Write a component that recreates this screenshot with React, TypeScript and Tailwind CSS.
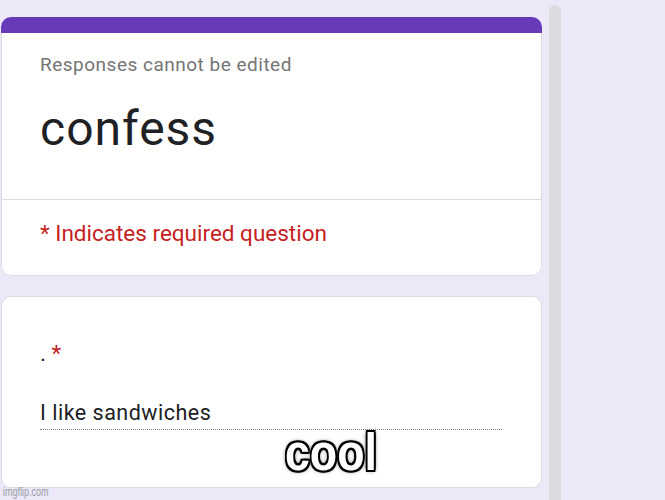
export default function App() {
  return (
    <div className="relative h-[500px] w-[665px] overflow-hidden bg-[#ede8f8] font-['Roboto',sans-serif]">
      <div className="flex gap-[7px] pl-px">
        <div className="flex w-[541px] flex-col gap-[20px] pt-[17px]">
          <div className="overflow-hidden rounded-[10px] bg-white">
            <div className="h-[16px] bg-[#673ab7]" />
            <div className="rounded-b-[10px] border-x border-b border-[#dadce0]">
              <div className="px-[38px] pb-[42px] pt-[20px]">
                <div className="text-[19px] leading-[24px] tracking-[0.5px] text-[#757575]">Responses cannot be edited</div>
                <div className="mt-[24px] text-[48px] leading-[56px] tracking-[1px] text-[#202124]">confess</div>
              </div>
              <div className="border-t border-[#dadce0] px-[38px] pb-[28px] pt-[19px] text-[22.5px] leading-[28px] text-[#c5221f]">
                * Indicates required question
              </div>
            </div>
          </div>
          <div className="h-[192px] rounded-[10px] border border-[#dadce0] bg-white px-[38px] pt-[42px]">
            <div className="text-[22.5px] leading-[28px] text-[#202124]">
              . <span className="text-[#c5221f]">*</span>
            </div>
            <div className="mt-[33px] w-[462px] border-b border-dotted border-[#80868b] pb-[3px] text-[21.5px] leading-[26px] tracking-[0.5px] text-[#202124]">
              I like sandwiches
            </div>
          </div>
        </div>
        <div className="mt-[5px] h-[520px] w-[12px] rounded-full bg-[#dadce0]" />
      </div>
      <div className="absolute left-[285px] top-[426px] origin-left scale-x-[0.86] font-['Liberation_Sans',sans-serif] text-[52px] font-bold leading-[52px] text-white [text-shadow:2px_2px_0_#000,-2px_-2px_0_#000,2px_-2px_0_#000,-2px_2px_0_#000,0_2px_0_#000,2px_0_0_#000,0_-2px_0_#000,-2px_0_0_#000,0_0_6px_#000]">
        cool
      </div>
      <div className="absolute left-[3px] top-[485px] origin-left scale-x-[0.75] font-['Liberation_Sans',sans-serif] text-[12px] leading-[14px] text-[#9aa0a6]">
        imgflip.com
      </div>
    </div>
  );
}
